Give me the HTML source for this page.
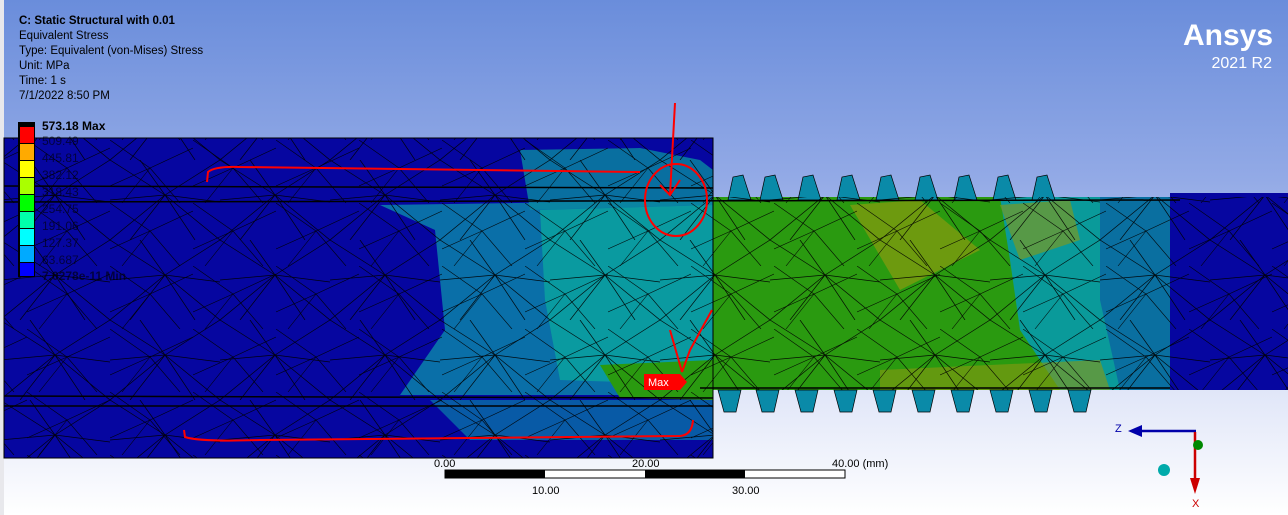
<!DOCTYPE html>
<html><head><meta charset="utf-8"><style>
html,body{margin:0;padding:0;width:1288px;height:515px;overflow:hidden;font-family:"Liberation Sans",sans-serif}
.t{position:absolute;font-size:11.5px;color:#000;line-height:13px}
</style></head><body>
<svg width="1288" height="515" style="position:absolute;left:0;top:0">
<defs>
<linearGradient id="bg" x1="0" y1="0" x2="0" y2="1">
<stop offset="0" stop-color="#6a8ddb"/><stop offset="0.35" stop-color="#93aae6"/><stop offset="0.75" stop-color="#dfe5f8"/><stop offset="1" stop-color="#ffffff"/>
</linearGradient>
<pattern id="mesh" width="110" height="80" patternUnits="userSpaceOnUse">
<path d="M0 0L55 35L110 0M55 35L0 80M55 35L110 80M55 35L30 0M55 35L85 80M0 40L55 35L110 42M20 80L55 35" stroke="#000" stroke-width="0.7" fill="none"/>
</pattern>
<pattern id="mesh2" width="83" height="63" patternUnits="userSpaceOnUse" patternTransform="translate(27 14)">
<path d="M0 0L40 28L83 8M40 28L12 63M40 28L70 63M0 46L40 28" stroke="#000" stroke-width="0.6" fill="none"/>
</pattern>
</defs>
<rect width="1288" height="515" fill="url(#bg)"/>
<rect x="0" y="0" width="4" height="515" fill="#e8e8ec"/>
<!-- nut -->
<rect x="4" y="138" width="709" height="320" fill="#0606a0"/>
<path d="M380 205 L713 200 L713 395 L400 395 L445 330 L435 230 Z" fill="#0a6fa8"/>
<path d="M540 210 L713 205 L713 385 L560 380 L545 300 Z" fill="#0a9aa0"/>
<path d="M520 150 L640 148 L700 160 L713 170 L713 205 L530 210 Z" fill="#0a8aa0" opacity="0.8"/>
<path d="M600 365 L713 360 L713 400 L620 398Z" fill="#2a9a10"/>
<path d="M430 400 L713 400 L713 440 L470 440 Z" fill="#0a7fa8" opacity="0.7"/>
<!-- right shaft -->
<rect x="713" y="197" width="460" height="193" fill="#2a9a10"/>
<path d="M1000 197 L1173 197 L1173 390 L1060 390 L1020 330 L1010 260Z" fill="#0a9a9a"/>
<path d="M1100 197 L1173 197 L1173 390 L1120 390 L1100 300Z" fill="#0a6fa0"/>
<rect x="1170" y="193" width="118" height="197" fill="#0606a0"/>
<path d="M850 205 L920 200 L980 250 L900 290 Z" fill="#8a9a10" opacity="0.7"/>
<path d="M1000 205 L1070 200 L1080 240 L1020 260Z" fill="#8a9a10" opacity="0.6"/>
<path d="M880 370 L1100 360 L1110 390 L880 390Z" fill="#8a9a10" opacity="0.6"/>
<!-- teeth -->
<g fill="#0a8aa8" stroke="#000" stroke-width="0.7">
<path d="M728 200L733 177L743 175L751 200Z"/><path d="M760 200L765 177L775 175L783 200Z"/><path d="M798 200L803 177L813 175L821 200Z"/><path d="M837 200L842 177L852 175L860 200Z"/><path d="M876 200L881 177L891 175L899 200Z"/><path d="M915 200L920 177L930 175L938 200Z"/><path d="M954 200L959 177L969 175L977 200Z"/><path d="M993 200L998 177L1008 175L1016 200Z"/><path d="M1032 200L1037 177L1047 175L1055 200Z"/>
<path d="M718 390L741 390L736 412L724 412Z"/><path d="M756 390L779 390L774 412L762 412Z"/><path d="M795 390L818 390L813 412L801 412Z"/><path d="M834 390L857 390L852 412L840 412Z"/><path d="M873 390L896 390L891 412L879 412Z"/><path d="M912 390L935 390L930 412L918 412Z"/><path d="M951 390L974 390L969 412L957 412Z"/><path d="M990 390L1013 390L1008 412L996 412Z"/><path d="M1029 390L1052 390L1047 412L1035 412Z"/><path d="M1068 390L1091 390L1086 412L1074 412Z"/>
</g>
<g opacity="0.9">
<rect x="4" y="138" width="709" height="320" fill="url(#mesh)"/>
<rect x="713" y="197" width="575" height="193" fill="url(#mesh)"/>
<rect x="4" y="138" width="709" height="320" fill="url(#mesh2)"/>
<rect x="713" y="197" width="575" height="193" fill="url(#mesh2)"/>
</g>
<g stroke="#000" stroke-width="1.5"><line x1="4" y1="186" x2="713" y2="188"/><line x1="4" y1="202" x2="1180" y2="200"/><line x1="4" y1="396" x2="713" y2="398"/><line x1="4" y1="406" x2="713" y2="406"/><line x1="700" y1="388" x2="1170" y2="388"/></g>
<rect x="4" y="138" width="709" height="320" fill="none" stroke="#000" stroke-width="1"/>
<!-- red annotations -->
<g stroke="#f00" stroke-width="2" fill="none">
<path d="M207 182 L208 172 Q215 166 240 167 L640 172"/>
<path d="M184 430 L185 437 Q200 442 260 440 L680 436 Q692 435 693 420"/>
<path d="M675 103 L670 195 M660 185 L670 195 L680 180"/>
<ellipse cx="676" cy="200" rx="31" ry="36"/>
<path d="M712 310 L690 350 L682 372 M670 330 L682 372"/>
</g>
<path d="M644 374 L680 374 L687 382 L680 390 L644 390 Z" fill="#f00"/>
<text x="648" y="386" font-size="11" fill="#fff" font-family="Liberation Sans">Max</text>
<!-- legend -->
<rect x="18" y="122" width="17" height="155" fill="#000"/>
<g>
<rect x="20" y="127" width="14" height="16" fill="#ff0000"/><rect x="20" y="144" width="14" height="16" fill="#ffaa00"/><rect x="20" y="161" width="14" height="16" fill="#ffff00"/><rect x="20" y="178" width="14" height="16" fill="#aaff00"/><rect x="20" y="195" width="14" height="16" fill="#00ff00"/><rect x="20" y="212" width="14" height="16" fill="#00ffaa"/><rect x="20" y="229" width="14" height="16" fill="#00ffff"/><rect x="20" y="246" width="14" height="16" fill="#00aaff"/><rect x="20" y="263" width="14" height="13" fill="#0000ff"/>
</g>
<g font-family="Liberation Sans" font-size="12" fill="#000" opacity="0.6">
<text x="42" y="145">509.49</text><text x="42" y="162">445.81</text><text x="42" y="179">382.12</text><text x="42" y="196">318.43</text><text x="42" y="213">254.75</text><text x="42" y="230">191.06</text><text x="42" y="247">127.37</text><text x="42" y="264">63.687</text>
</g>
<text x="42" y="280" font-family="Liberation Sans" font-size="12" font-weight="bold" fill="#000" opacity="0.6">7.0278e-11 Min</text>
<text x="42" y="130" font-family="Liberation Sans" font-size="12" font-weight="bold" fill="#000">573.18 Max</text>
<!-- scale bar -->
<rect x="445" y="470" width="400" height="8" fill="#fff" stroke="#000"/>
<rect x="445" y="470" width="100" height="8" fill="#000"/><rect x="645" y="470" width="100" height="8" fill="#000"/>
<g font-family="Liberation Sans" font-size="11" fill="#000">
<text x="434" y="467">0.00</text><text x="632" y="467">20.00</text><text x="832" y="467">40.00 (mm)</text><text x="532" y="494">10.00</text><text x="732" y="494">30.00</text>
</g>
<!-- triad -->
<line x1="1196" y1="431" x2="1140" y2="431" stroke="#00a" stroke-width="2.5"/>
<path d="M1128 431 L1142 425 L1142 437Z" fill="#00a"/>
<text x="1115" y="432" font-family="Liberation Sans" font-size="11" fill="#00a">Z</text>
<line x1="1195" y1="432" x2="1195" y2="480" stroke="#c00" stroke-width="2.5"/>
<path d="M1190 478 L1200 478 L1195 494Z" fill="#c00"/>
<text x="1192" y="507" font-family="Liberation Sans" font-size="11" fill="#c00">X</text>
<circle cx="1198" cy="445" r="5" fill="#080"/>
<circle cx="1164" cy="470" r="6" fill="#0aa"/>
</svg>
<div class="t" style="left:19px;top:15px;font-weight:bold">C: Static Structural with 0.01</div>
<div class="t" style="left:19px;top:30px">Equivalent Stress</div>
<div class="t" style="left:19px;top:45px">Type: Equivalent (von-Mises) Stress</div>
<div class="t" style="left:19px;top:60px">Unit: MPa</div>
<div class="t" style="left:19px;top:75px">Time: 1 s</div>
<div class="t" style="left:19px;top:90px">7/1/2022 8:50 PM</div>
<div style="position:absolute;right:15px;top:20px;color:#fff;font-weight:bold;font-size:30px;line-height:32px">Ansys</div>
<div style="position:absolute;right:16px;top:55px;color:#fff;font-size:16px;line-height:18px">2021 R2</div>
</body></html>
